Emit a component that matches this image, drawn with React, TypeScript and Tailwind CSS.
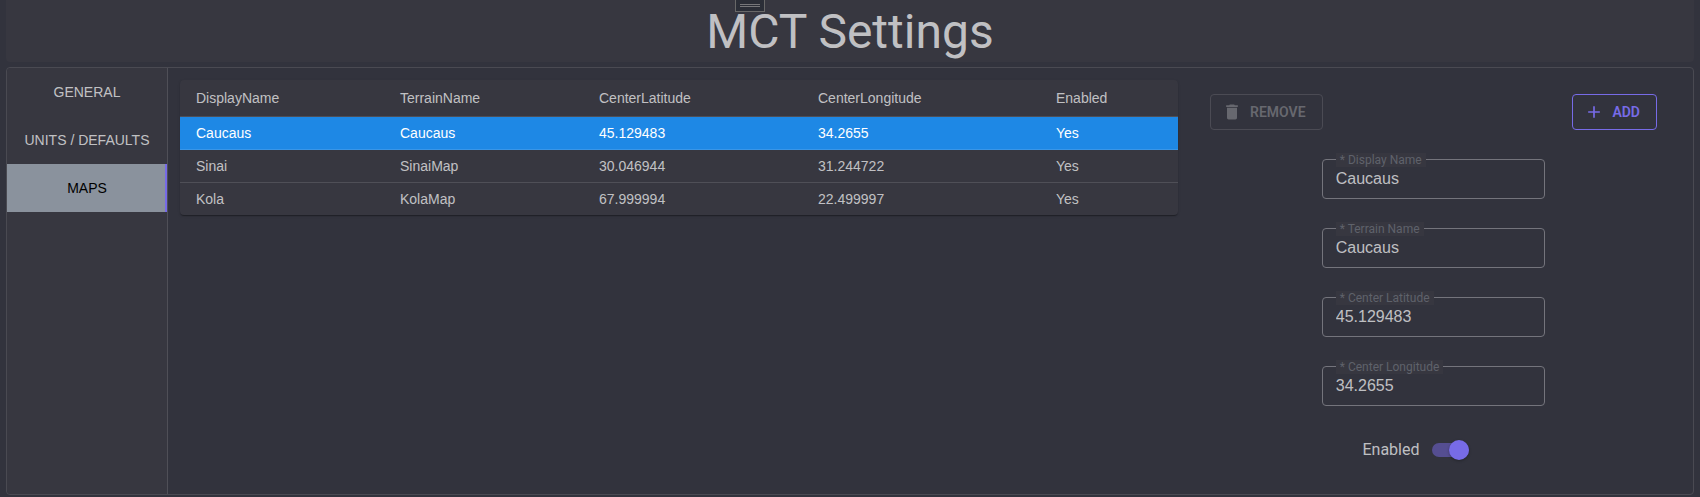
import { useState } from "react";

type TerrainMap = {
  displayName: string;
  terrainName: string;
  latitude: string;
  longitude: string;
  enabled: boolean;
};

const tabs = ["General", "Units / Defaults", "Maps"];

const initialMaps: TerrainMap[] = [
  { displayName: "Caucaus", terrainName: "Caucaus", latitude: "45.129483", longitude: "34.2655", enabled: true },
  { displayName: "Sinai", terrainName: "SinaiMap", latitude: "30.046944", longitude: "31.244722", enabled: true },
  { displayName: "Kola", terrainName: "KolaMap", latitude: "67.999994", longitude: "22.499997", enabled: true },
];

const columns = [
  { title: "DisplayName", width: "w-[204px]" },
  { title: "TerrainName", width: "w-[199px]" },
  { title: "CenterLatitude", width: "w-[219px]" },
  { title: "CenterLongitude", width: "w-[238px]" },
  { title: "Enabled", width: "w-auto" },
];

function TextField({
  id,
  label,
  value,
  onChange,
}: {
  id: string;
  label: string;
  value: string;
  onChange: (value: string) => void;
}) {
  return (
    <div className="relative w-1/2">
      <input
        id={id}
        value={value}
        onChange={(e) => onChange(e.target.value)}
        className="block h-10 w-full rounded border border-[#74747c] bg-transparent px-[13px] text-base text-white/70 outline-none focus:border-[#776be7]"
      />
      <label
        htmlFor={id}
        className="absolute -top-1.5 left-[14px] bg-[#373740] px-1 font-[Roboto,sans-serif] text-xs leading-[14px] text-[#5f626b]"
      >
        * {label}
      </label>
    </div>
  );
}

export default function App() {
  const [tab, setTab] = useState("Maps");
  const [maps, setMaps] = useState(initialMaps);
  const [selected, setSelected] = useState(0);
  const current = maps[selected];

  const update = (patch: Partial<TerrainMap>) =>
    setMaps(maps.map((m, i) => (i === selected ? { ...m, ...patch } : m)));

  return (
    <div className="flex min-h-screen flex-col gap-[5px] bg-[#32333d] px-1.5 pb-0.5 font-['Liberation_Sans',Arial,sans-serif] text-white/70">
      <header className="relative rounded-b bg-[#373740] pt-0.5">
        <h1 className="text-center font-[Roboto,sans-serif] text-5xl leading-[60px] font-normal">MCT Settings</h1>
        <button
          type="button"
          aria-label="Expand toolbar"
          className="absolute top-0 left-1/2 -ml-[115px] flex h-3 w-[30px] flex-col items-center justify-end gap-px border border-t-0 border-[#686868] bg-[#2b2e37] pb-1"
        >
          <span className="h-px w-5 bg-[#77777a]" />
          <span className="h-px w-5 bg-[#77777a]" />
        </button>
      </header>

      <main className="flex grow rounded border border-[#4a4a52]">
        <nav className="flex w-[161px] shrink-0 flex-col rounded-l border-r border-[#4f4f57] bg-[#373740]">
          {tabs.map((name) => (
            <button
              key={name}
              type="button"
              onClick={() => setTab(name)}
              className={
                name === tab
                  ? "h-12 bg-[#8a929d] text-sm text-black uppercase shadow-[inset_-2px_0_#776be7]"
                  : "h-12 text-sm uppercase"
              }
            >
              {name}
            </button>
          ))}
        </nav>

        <section className="grid grow grid-cols-3 items-start py-3 pr-4 pl-3">
          <div className="col-span-2 overflow-hidden rounded bg-[#373740] shadow-[0_2px_1px_-1px_rgba(0,0,0,0.2),0_1px_1px_0_rgba(0,0,0,0.14),0_1px_3px_0_rgba(0,0,0,0.12)]">
            <table className="w-full table-fixed border-separate border-spacing-0 text-left text-sm">
              <colgroup>
                {columns.map((c) => (
                  <col key={c.title} className={c.width} />
                ))}
              </colgroup>
              <thead>
                <tr>
                  {columns.map((c) => (
                    <th key={c.title} className="h-[37px] border-b border-white/12 pl-4 font-normal">
                      {c.title}
                    </th>
                  ))}
                </tr>
              </thead>
              <tbody>
                {maps.map((m, i) => (
                  <tr
                    key={i}
                    onClick={() => setSelected(i)}
                    className={
                      i === selected
                        ? "cursor-pointer bg-[#1e88e5] text-white [&>td]:border-b"
                        : "cursor-pointer [&:not(:last-child)>td]:border-b"
                    }
                  >
                    {[m.displayName, m.terrainName, m.latitude, m.longitude, m.enabled ? "Yes" : "No"].map((v, j) => (
                      <td key={j} className="border-white/12 py-1.5 pl-4 leading-5">
                        {v}
                      </td>
                    ))}
                  </tr>
                ))}
              </tbody>
            </table>
          </div>

          <form className="flex flex-col pt-3.5 pr-5 pl-8" onSubmit={(e) => e.preventDefault()}>
            <div className="flex justify-between font-[Roboto,sans-serif] text-sm font-semibold">
              <button
                type="button"
                disabled
                className="flex h-9 items-center gap-2 rounded border border-[#4b4b54] pr-4 pl-[11px] text-[#67686f]"
              >
                <svg viewBox="0 0 24 24" className="size-5" fill="currentColor" aria-hidden="true">
                  <path d="M6 19c0 1.100.9 2 2 2h8c1.100 0 2-.9 2-2V7H6v12zM19 4h-3.500l-1-1h-5l-1 1H5v2h14V4z" />
                </svg>
                REMOVE
              </button>
              <button
                type="button"
                className="flex h-9 items-center gap-2 rounded border border-[#776be7] pr-4 pl-[11px] text-[#776be7]"
              >
                <svg viewBox="0 0 24 24" className="size-5" fill="currentColor" aria-hidden="true">
                  <path d="M19 13h-6v6h-2v-6H5v-2h6V5h2v6h6v2z" />
                </svg>
                ADD
              </button>
            </div>

            <div className="mt-[29px] flex flex-col items-center gap-[29px]">
              <TextField id="display-name" label="Display Name" value={current.displayName} onChange={(v) => update({ displayName: v })} />
              <TextField id="terrain-name" label="Terrain Name" value={current.terrainName} onChange={(v) => update({ terrainName: v })} />
              <TextField id="center-latitude" label="Center Latitude" value={current.latitude} onChange={(v) => update({ latitude: v })} />
              <TextField id="center-longitude" label="Center Longitude" value={current.longitude} onChange={(v) => update({ longitude: v })} />
            </div>

            <label className="mt-8 flex cursor-pointer items-center justify-center gap-3 pr-9 font-[Roboto,sans-serif] text-base">
              Enabled
              <input
                type="checkbox"
                role="switch"
                checked={current.enabled}
                onChange={(e) => update({ enabled: e.target.checked })}
                className="peer sr-only"
              />
              <span className="flex h-3.5 w-[37px] items-center rounded-full bg-white/25 peer-checked:justify-end peer-checked:bg-[#554e91] peer-checked:[&>span]:bg-[#776be7]">
                <span className="size-5 rounded-full bg-gray-300 shadow-[0_1px_3px_rgba(0,0,0,0.3)]" />
              </span>
            </label>
          </form>
        </section>
      </main>
    </div>
  );
}
